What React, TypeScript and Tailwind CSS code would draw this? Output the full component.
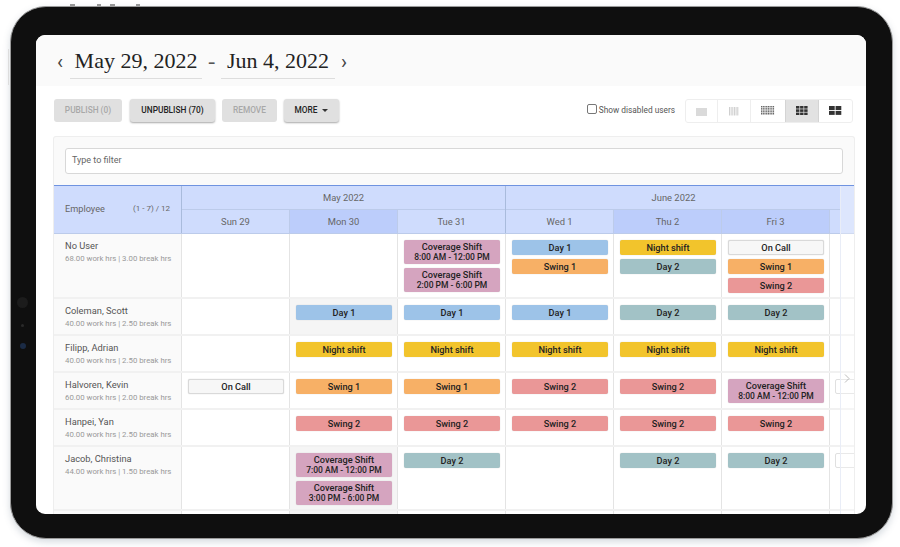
import React from "react";

type Kind = "d1" | "d2" | "n" | "s1" | "s2" | "c" | "o";
type S = { k: Kind; t: string; sub?: string };
const cls: Record<Kind, string> = {
  d1: "bg-[#9dc3e8]",
  d2: "bg-[#a2c2c6]",
  n: "bg-[#f2c42c]",
  s1: "bg-[#f7b066]",
  s2: "bg-[#ea9797]",
  c: "bg-[#d5a4bf]",
  o: "bg-[#f7f7f7] border border-[#d9d9d9]",
};
const D1: S = { k: "d1", t: "Day 1" };
const D2: S = { k: "d2", t: "Day 2" };
const N: S = { k: "n", t: "Night shift" };
const S1: S = { k: "s1", t: "Swing 1" };
const S2: S = { k: "s2", t: "Swing 2" };
const O: S = { k: "o", t: "On Call" };
const C = (sub: string): S => ({ k: "c", t: "Coverage Shift", sub });

const rows: { name: string; hrs: string; h: string; cells: S[][]; grey?: number; ghost?: boolean }[] = [
  { name: "No User", hrs: "68.00 work hrs | 3.00 break hrs", h: "h-[65px]", cells: [[], [], [C("8:00 AM - 12:00 PM"), C("2:00 PM - 6:00 PM")], [D1, S1], [N, D2], [O, S1, S2]] },
  { name: "Coleman, Scott", hrs: "40.00 work hrs | 2.50 break hrs", h: "h-[37px]", cells: [[], [D1], [D1], [D1], [D2], [D2]], grey: 1 },
  { name: "Filipp, Adrian", hrs: "40.00 work hrs | 2.50 break hrs", h: "h-[37px]", cells: [[], [N], [N], [N], [N], [N]] },
  { name: "Halvoren, Kevin", hrs: "60.00 work hrs | 2.00 break hrs", h: "h-[37px]", cells: [[O], [S1], [S1], [S2], [S2], [C("8:00 AM - 12:00 PM")]], ghost: true },
  { name: "Hanpei, Yan", hrs: "40.00 work hrs | 2.50 break hrs", h: "h-[37px]", cells: [[], [S2], [S2], [S2], [S2], [S2]] },
  { name: "Jacob, Christina", hrs: "44.00 work hrs | 1.50 break hrs", h: "h-[64px]", cells: [[], [C("7:00 AM - 12:00 PM"), C("3:00 PM - 6:00 PM")], [D2], [], [D2], [D2]], grey: 1, ghost: true },
];

function Shift({ s }: { s: S }) {
  return (
    <div className={`${cls[s.k]} rounded-[2px] w-[96px] flex flex-col items-center justify-center text-[#222] shadow-[0_0_1px_rgba(0,0,0,0.25)] ${s.sub ? "h-[24px]" : "h-[15px] pb-px"}`}>
      <div className="text-[9.2px] font-medium leading-[11px]">{s.t}</div>
      {s.sub && <div className="text-[8.5px] font-medium leading-[11px]">{s.sub}</div>}
    </div>
  );
}

function Grid({ cols, rows, w, h, gap, color }: { cols: number; rows: number; w: number; h: number; gap: number; color: string }) {
  const tw = cols * w + (cols - 1) * gap;
  const th = rows * h + (rows - 1) * gap;
  const r = [];
  for (let i = 0; i < cols; i++) for (let j = 0; j < rows; j++) r.push(<rect key={i + "-" + j} x={i * (w + gap)} y={j * (h + gap)} width={w} height={h} fill={color} />);
  return <svg width={tw} height={th} viewBox={`0 0 ${tw} ${th}`}>{r}</svg>;
}

const btnBase = "h-[23px] rounded-[3px] bg-[#e0e0e0] flex items-center justify-center text-[8.3px] font-medium";

export default function App() {
  return (
    <div className="w-[900px] h-[547px] bg-white overflow-hidden font-['Roboto',sans-serif] pl-[10px] pt-[6px]">
      <div className="relative w-[883px] h-[533px] rounded-[36px] bg-[#0f0f0f] border border-[#9a9a9a] shadow-[0_3px_7px_rgba(90,110,130,0.25)] pl-[25px] pt-[28px]">
        <div className="absolute left-[59px] -top-[3px] w-[70px] h-[2px] flex justify-between">
          <span className="w-[5px] h-[2px] bg-[#999]" />
          <span className="w-[4px] h-[2px] ml-[22px] bg-[#999]" />
          <span className="w-[5px] h-[2px] ml-[9px] bg-[#999]" />
          <span className="w-[4px] h-[2px] ml-auto bg-[#999]" />
        </div>
        <div className="absolute -left-[3px] top-[42px] w-[1px] h-[36px] bg-[#ddd]" />
        <div className="absolute left-[6px] top-[290px] w-[11px] h-[11px] rounded-full bg-[#1c1c1c]" />
        <div className="absolute left-[10px] top-[317px] w-[3px] h-[3px] rounded-full bg-[#2a2a2a]" />
        <div className="absolute left-[9px] top-[336px] w-[6px] h-[6px] rounded-full bg-[#1b2b45]" />
        <div className="w-[830px] h-[479px] bg-white rounded-[9px] overflow-hidden">
          <div className="h-[51px] bg-[#fafafa] flex items-start pl-[20px] text-[#222] font-['Liberation_Serif',serif] text-[22px]">
            <span className="mt-[15px] mr-[6px] w-[8px] text-center text-[#444] text-[20px] leading-[24px] font-['Roboto',sans-serif]">‹</span>
            <div className="mt-[10px] h-[34px] w-[132px] border-b border-[#ddd] text-center leading-[32px] whitespace-nowrap">May 29, 2022</div>
            <span className="mt-[10px] mx-[6px] w-[7px] leading-[32px] text-center text-[#555]">-</span>
            <div className="mt-[10px] h-[34px] w-[114px] border-b border-[#ddd] text-center leading-[32px] whitespace-nowrap">Jun 4, 2022</div>
            <span className="mt-[15px] ml-[5px] w-[8px] text-center text-[#444] text-[20px] leading-[24px] font-['Roboto',sans-serif]">›</span>
          </div>
          <div className="h-[50px] pl-[18px] pr-[13px] flex items-start pt-[13px]">
            <div className={`${btnBase} w-[68px] text-[#a8a8a8]`}>PUBLISH (0)</div>
            <div className={`${btnBase} w-[85px] ml-[8px] text-[#222] shadow-[0_1px_2px_rgba(0,0,0,0.35)]`}>UNPUBLISH (70)</div>
            <div className={`${btnBase} w-[55px] ml-[7px] text-[#a8a8a8]`}>REMOVE</div>
            <div className={`${btnBase} w-[55px] ml-[7px] text-[#222] shadow-[0_1px_2px_rgba(0,0,0,0.35)] gap-[5px]`}>
              MORE
              <span className="w-0 h-0 border-l-[3px] border-r-[3px] border-t-[3px] border-l-transparent border-r-transparent border-t-[#333]" />
            </div>
            <div className="ml-auto flex items-center h-[23px]">
              <span className="w-[10px] h-[10px] border border-[#777] rounded-[2px] bg-white -mt-[3px] mr-[2px]" />
              <span className="text-[8.3px] text-[#555] mr-[10px]">Show disabled users</span>
              <div className="flex h-[24px] border border-[#eee] rounded-[3px] w-[168px] overflow-hidden">
                <div className="w-[32px] flex items-center justify-center border-r border-[#eee] pt-[2px]"><div className="w-[11px] h-[8px] bg-[#dadada]" /></div>
                <div className="w-[33px] flex items-center justify-center border-r border-[#eee] pt-[2px]"><Grid cols={7} rows={1} w={1} h={8.5} gap={0.65} color="#cfcfcf" /></div>
                <div className="w-[34px] flex items-center justify-center"><Grid cols={8} rows={6} w={1.2} h={1.2} gap={0.5} color="#666" /></div>
                <div className="w-[34px] flex items-center justify-center bg-[#e2e2e2] border-x border-[#d4d4d4]"><Grid cols={3} rows={3} w={3.4} h={2.6} gap={0.7} color="#333" /></div>
                <div className="flex-1 flex items-center justify-center"><Grid cols={2} rows={2} w={5.7} h={4} gap={0.9} color="#333" /></div>
              </div>
            </div>
          </div>
          <div className="ml-[17px] w-[802px] h-[378px] border border-[#eee] border-b-0 rounded-t-[3px] bg-[#fafafa] overflow-hidden relative">
            <div className="h-[48px] px-[11px] pt-[11px]">
              <div className="h-[26px] w-[778px] border border-[#d8d8d8] rounded-[3px] bg-white flex items-center pl-[6px] text-[9px] text-[#666]">Type to filter</div>
            </div>
            <div className="w-[1000px] border-t border-[#6f93e0]">
              <div className="flex h-[48px] text-[9.4px] text-[#666] bg-[#cfdcfd] border-b border-[#bccbea]">
                <div className="w-[128px] shrink-0 flex items-center justify-between pl-[11px] pr-[11px] pb-px border-r border-[#a9bbdc] text-[9.2px]">
                  <span>Employee</span><span className="text-[8px]">(1 - 7) / 12</span>
                </div>
                <div className="flex flex-col w-[324px] shrink-0 border-r border-[#a9bbdc]">
                  <div className="h-[24px] pt-px flex items-center justify-center border-b border-[#bccbea]">May 2022</div>
                  <div className="flex flex-1">
                    <div className="w-[108px] pt-px flex items-center justify-center border-r border-[#bccbea]">Sun 29</div>
                    <div className="w-[108px] pt-px flex items-center justify-center bg-[#bccdfb] border-r border-[#bccbea]">Mon 30</div>
                    <div className="w-[107px] pt-px flex items-center justify-center">Tue 31</div>
                  </div>
                </div>
                <div className="flex flex-col w-[335px] shrink-0">
                  <div className="h-[24px] pt-px flex items-center justify-center border-b border-[#bccbea]">June 2022</div>
                  <div className="flex flex-1">
                    <div className="w-[108px] pt-px flex items-center justify-center border-r border-[#bccbea]">Wed 1</div>
                    <div className="w-[108px] pt-px flex items-center justify-center bg-[#bccdfb] border-r border-[#bccbea]">Thu 2</div>
                    <div className="w-[108px] pt-px flex items-center justify-center bg-[#bccdfb] border-r border-[#bccbea]">Fri 3</div>
                  </div>
                </div>
              </div>
              {rows.map((r) => (
                <div key={r.name} className={`flex ${r.h} bg-white border-b-2 border-[#f1f1f1]`}>
                  <div className="w-[128px] shrink-0 bg-[#fafafa] pl-[11px] pt-[5px] border-r border-[#e4e4e4]">
                    <div className="text-[9.3px] leading-[13px] text-[#555]">{r.name}</div>
                    <div className="text-[7.8px] leading-[12px] mt-[1px] text-[#999] whitespace-nowrap">{r.hrs}</div>
                  </div>
                  {r.cells.map((c, i) => (
                    <div key={i} className={`w-[108px] shrink-0 pt-[6px] pl-[6px] border-r border-[#e4e4e4] flex flex-col gap-[4px] ${r.grey === i ? "bg-[#f5f5f5]" : ""}`}>
                      {c.map((s, j) => <Shift key={j} s={s} />)}
                    </div>
                  ))}
                  <div className="pl-[5px] pt-[6px]">
                    {r.ghost && <div className="w-[40px] h-[15px] border border-[#e0e0e0] rounded-[2px]" />}
                  </div>
                </div>
              ))}
              <div className="flex h-[20px] bg-white">
                <div className="w-[128px] shrink-0 bg-[#fafafa] border-r border-[#e4e4e4]" />
                {[0, 1, 2, 3, 4, 5].map((i) => (
                  <div key={i} className={`w-[108px] shrink-0 border-r border-[#e4e4e4] ${i === 1 ? "bg-[#f5f5f5]" : ""}`} />
                ))}
              </div>
            </div>
            <div className="absolute right-0 top-[49px] w-[14px] h-[329px] bg-white/30 border-l border-[#e9edf7]" />
            <svg className="absolute left-[788px] top-[237px]" width="8" height="9" viewBox="0 0 8 9" fill="none" stroke="#aaa" strokeWidth="0.8"><path d="M3 0.5 7 4.5 3 8.5" /></svg>
          </div>
        </div>
      </div>
    </div>
  );
}
